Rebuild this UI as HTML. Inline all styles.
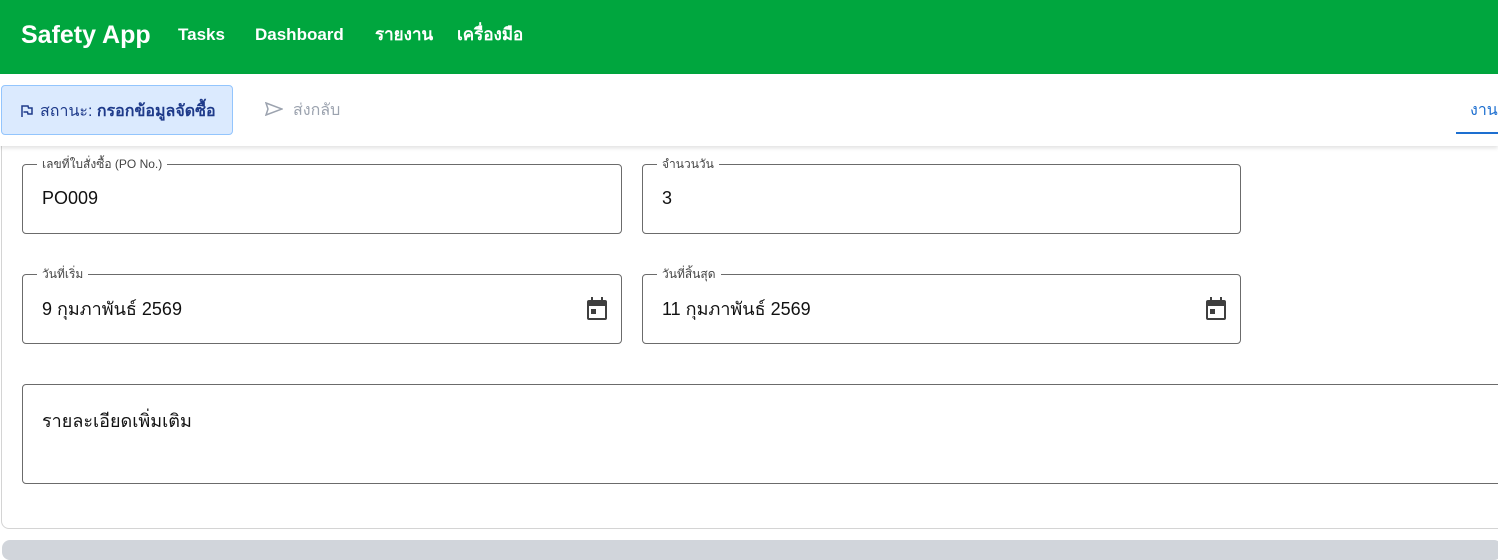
<!DOCTYPE html>
<html><head><meta charset="utf-8"><style>
*{box-sizing:border-box;margin:0;padding:0}
body{width:1498px;height:546px;overflow:hidden;background:#fff;font-family:"Liberation Sans","Noto Sans CJK SC",sans-serif;position:relative}
.hdr{position:absolute;left:0;top:0;width:1498px;height:74px;background:#00a63e;color:#fff}
.hdr .logo{position:absolute;left:21px;top:21px;font-size:25px;font-weight:bold}
.hdr .n{position:absolute;top:25px;font-size:17px;font-weight:bold}
.tb{position:absolute;left:0;top:74px;width:1498px;height:72px;background:#fff;box-shadow:0 2px 4px rgba(0,0,0,.12);z-index:2}
.st{position:absolute;left:1px;top:11px;width:232px;height:50px;background:#dbeafe;border:1px solid #93c5fd;border-radius:4px;color:#1e3a8a;font-size:16px;padding:13px 0 0 18px}
.snd{position:absolute;left:265px;top:24px;color:#9ca3af;font-size:16px}
.tab{position:absolute;left:1470px;top:24px;color:#1d6fd0;font-size:16px}
.tabl{position:absolute;left:1456px;top:58px;width:42px;height:2px;background:#1d6fd0}
.card{position:absolute;left:1px;top:130px;width:1520px;height:399px;border:1px solid #d4d4d4;border-radius:8px;background:#fff}
.strip{position:absolute;left:2px;top:540px;width:1500px;height:20px;background:#d1d5db;border-radius:8px}
.f{position:absolute;border:1px solid #6b6b6b;border-radius:4px;height:70px}
.f .l{position:absolute;left:14px;top:-10px;background:#fff;padding:0 5px;font-size:12px;color:#444}
.f .v{position:absolute;left:19px;top:23px;font-size:18px;color:#111}
.f .t{top:19px}
.cal{position:absolute;right:12px;top:21px}
</style></head><body>
<div class="hdr"><div class="logo">Safety App</div>
<div class="n" style="left:178px">Tasks</div><div class="n" style="left:255px">Dashboard</div><div class="n" style="left:375px;top:21px">รายงาน</div><div class="n" style="left:457px;top:21px">เครื่องมือ</div></div>
<div class="card"></div>
<div class="strip"></div>
<div class="tb">
<div class="st"><svg width="14" height="14" viewBox="0 0 14 14" style="vertical-align:-2px;margin-right:6px"><path d="M2 13V2h6l.5 2H12v6H8l-.5-2H3.5" fill="none" stroke="#1e3a8a" stroke-width="1.5"/></svg>สถานะ: <b>กรอกข้อมูลจัดซื้อ</b></div>
<div class="snd"><svg width="18" height="14" viewBox="0 0 18 14" style="vertical-align:-1px;margin-right:10px"><path d="M1 1l16 6L1 13l2-6z" fill="none" stroke="#9ca3af" stroke-width="1.5"/></svg>ส่งกลับ</div>
<div class="tab">งาน</div><div class="tabl"></div>
</div>
<div class="f" style="left:22px;top:164px;width:600px"><span class="l">เลขที่ใบสั่งซื้อ (PO No.)</span><span class="v">PO009</span></div>
<div class="f" style="left:642px;top:164px;width:599px"><span class="l">จำนวนวัน</span><span class="v">3</span></div>
<div class="f" style="left:22px;top:274px;width:600px"><span class="l">วันที่เริ่ม</span><span class="v t">9 กุมภาพันธ์ 2569</span>
<svg class="cal" width="24" height="26" viewBox="0 0 24 26"><rect x="2" y="4" width="20" height="20" rx="2" fill="#3f3f3f"/><rect x="4" y="10" width="16" height="12" fill="#fff"/><rect x="6" y="1" width="2" height="5" fill="#3f3f3f"/><rect x="16" y="1" width="2" height="5" fill="#3f3f3f"/><rect x="6" y="13" width="5" height="5" fill="#3f3f3f"/></svg></div>
<div class="f" style="left:642px;top:274px;width:599px"><span class="l">วันที่สิ้นสุด</span><span class="v t">11 กุมภาพันธ์ 2569</span>
<svg class="cal" width="24" height="26" viewBox="0 0 24 26"><rect x="2" y="4" width="20" height="20" rx="2" fill="#3f3f3f"/><rect x="4" y="10" width="16" height="12" fill="#fff"/><rect x="6" y="1" width="2" height="5" fill="#3f3f3f"/><rect x="16" y="1" width="2" height="5" fill="#3f3f3f"/><rect x="6" y="13" width="5" height="5" fill="#3f3f3f"/></svg></div>
<div class="f" style="left:22px;top:384px;width:1500px;height:100px"><span class="v" style="top:21px">รายละเอียดเพิ่มเติม</span></div>
</body></html>
